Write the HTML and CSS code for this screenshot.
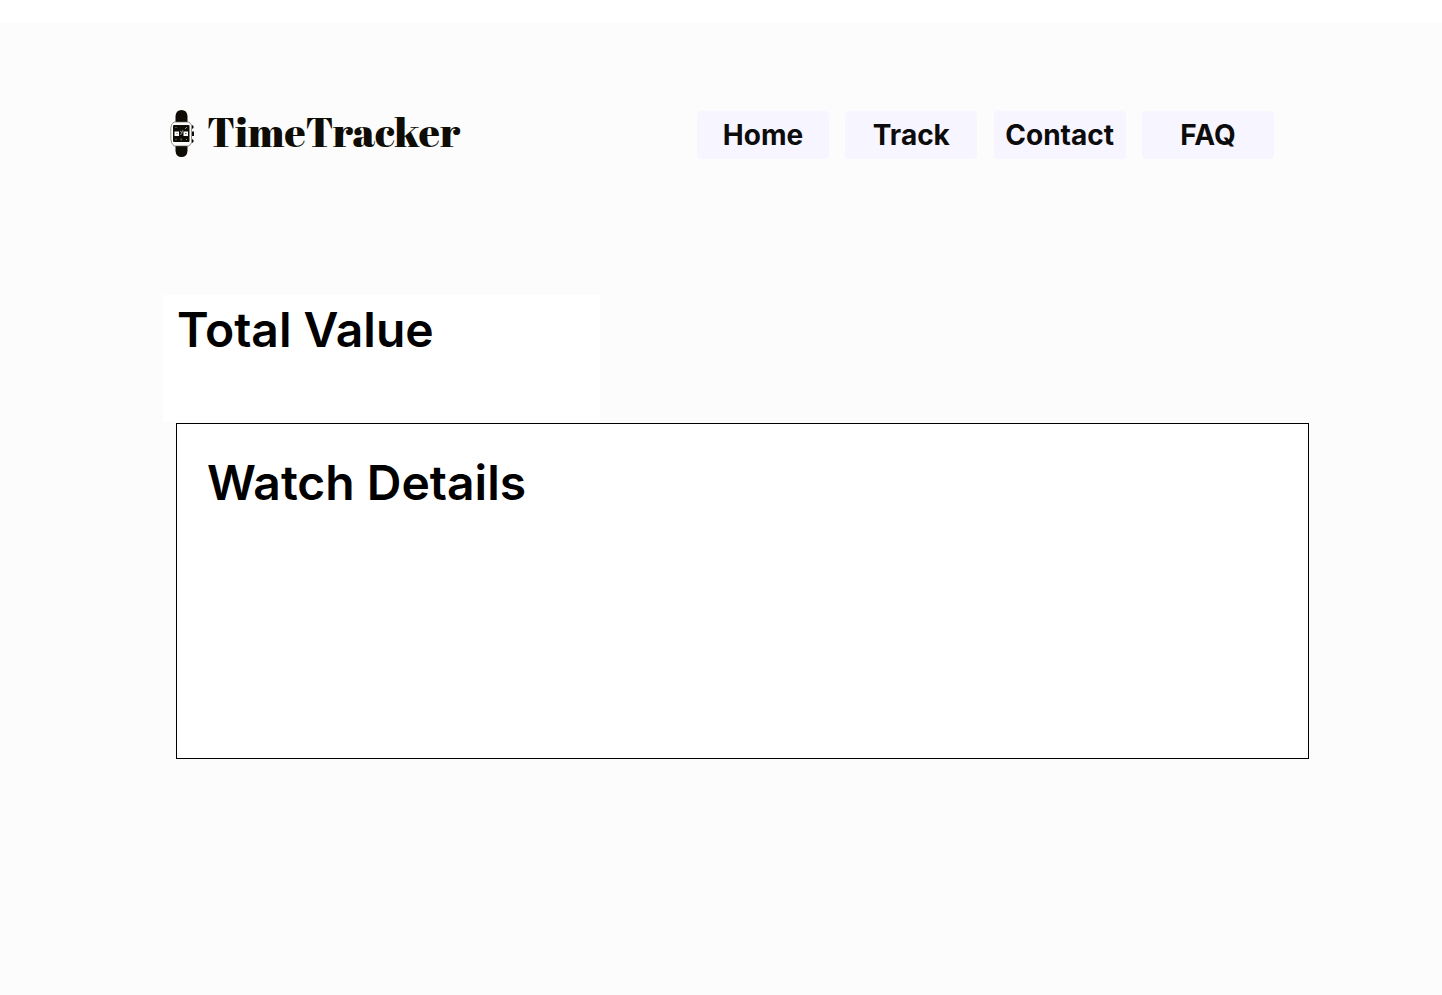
FILE: index.html
```html
<!DOCTYPE html>
<html lang="en">
<head>
<meta charset="utf-8">
<title>TimeTracker</title>
<link rel="stylesheet" href="styles.css">
</head>
<body>
<div class="page">
  <header class="header">
    <a class="brand" href="#">
      <svg class="brand-icon" viewBox="0 0 24 48" aria-hidden="true">
        <path d="M5.500 13V6Q6 0 11.500 0Q17 0 17.500 6V13ZM5.500 34V41Q6 47 11.500 47Q17 47 17.500 41V34Z" fill="#0e0c04"/>
        <path d="M4 12H19L21.500 15V33L19 36H4Q.8 33 .8 29V18Q.8 14 4 12Z" fill="#fcfcfc" stroke="#66645e" stroke-width=".7"/>
        <rect x="3" y="15" width="16.500" height="17" rx="1" fill="#0e0c04"/>
        <path d="M4.500 21.500H9V26H4.500ZM13.500 21.500H18V26H13.500Z" fill="#fcfcfc"/>
        <path d="M11.200 28.500V30.500M5.500 17l1 1M17 17l-2 2M5.500 30l1-1M17 30l-1-1M10 21l2.500 2M13 20l-2.500 5" stroke="#c4c4c0" stroke-width=".7"/>
        <path d="M6.500 23.500H7.500M15 23.500H16.500" stroke="#77756f"/>
        <path d="M22 15L23.500 16V18L22 19ZM22 21.500H24V26H22ZM22 29L23.500 30V32L22 33Z" fill="#0e0c04"/>
      </svg>
      <span class="brand-name">TimeTracker</span>
    </a>
    <nav class="nav">
      <a class="nav-link" href="#">Home</a>
      <a class="nav-link" href="#">Track</a>
      <a class="nav-link" href="#">Contact</a>
      <a class="nav-link" href="#">FAQ</a>
    </nav>
  </header>
  <main class="content">
    <section class="total"><h1 class="title">Total Value</h1></section>
    <section class="details"><h2 class="title">Watch Details</h2></section>
  </main>
</div>
</body>
</html>
```
FILE: styles.css
```css
* { box-sizing: border-box; }
body {
  margin: 0;
  padding-top: 23px;
  min-height: 100vh;
  display: flex;
  background: #fff;
  color: #000;
  font-family: Inter, "Liberation Sans", sans-serif;
}
.page {
  flex: 1;
  padding: 87px 133px 0 163px;
  background: #fcfcfc;
}
.header {
  display: flex;
  justify-content: space-between;
  align-items: flex-start;
  padding: 0 35px 0 7px;
}
.brand {
  display: flex;
  align-items: flex-start;
  gap: 13px;
  color: #0e0c04;
  text-decoration: none;
}
.brand-icon { width: 24px; height: 48px; }
.brand-name {
  font-family: "Abril Fatface", "Liberation Serif", serif;
  font-weight: 400;
  font-size: 41px;
  line-height: 44px;
}
.nav {
  display: flex;
  justify-content: space-between;
  width: 577px;
  padding-top: 1px;
}
.nav-link {
  width: 132px;
  border-radius: 4px;
  background: #f7f5ff;
  color: #0c0c0c;
  font-size: 28px;
  font-weight: 700;
  line-height: 48px;
  text-align: center;
  text-decoration: none;
}
.content { padding-top: 136px; }
.total {
  width: 437px;
  min-height: 127px;
  padding: 6px 14px;
  background: #fff;
}
.details {
  min-height: 336px;
  margin: 1px 0 0 13px;
  padding: 30px;
  border: 1px solid #000;
  background: #fff;
}
.title {
  margin: 0;
  font-size: 48px;
  font-weight: 600;
  line-height: 58px;
}
```
